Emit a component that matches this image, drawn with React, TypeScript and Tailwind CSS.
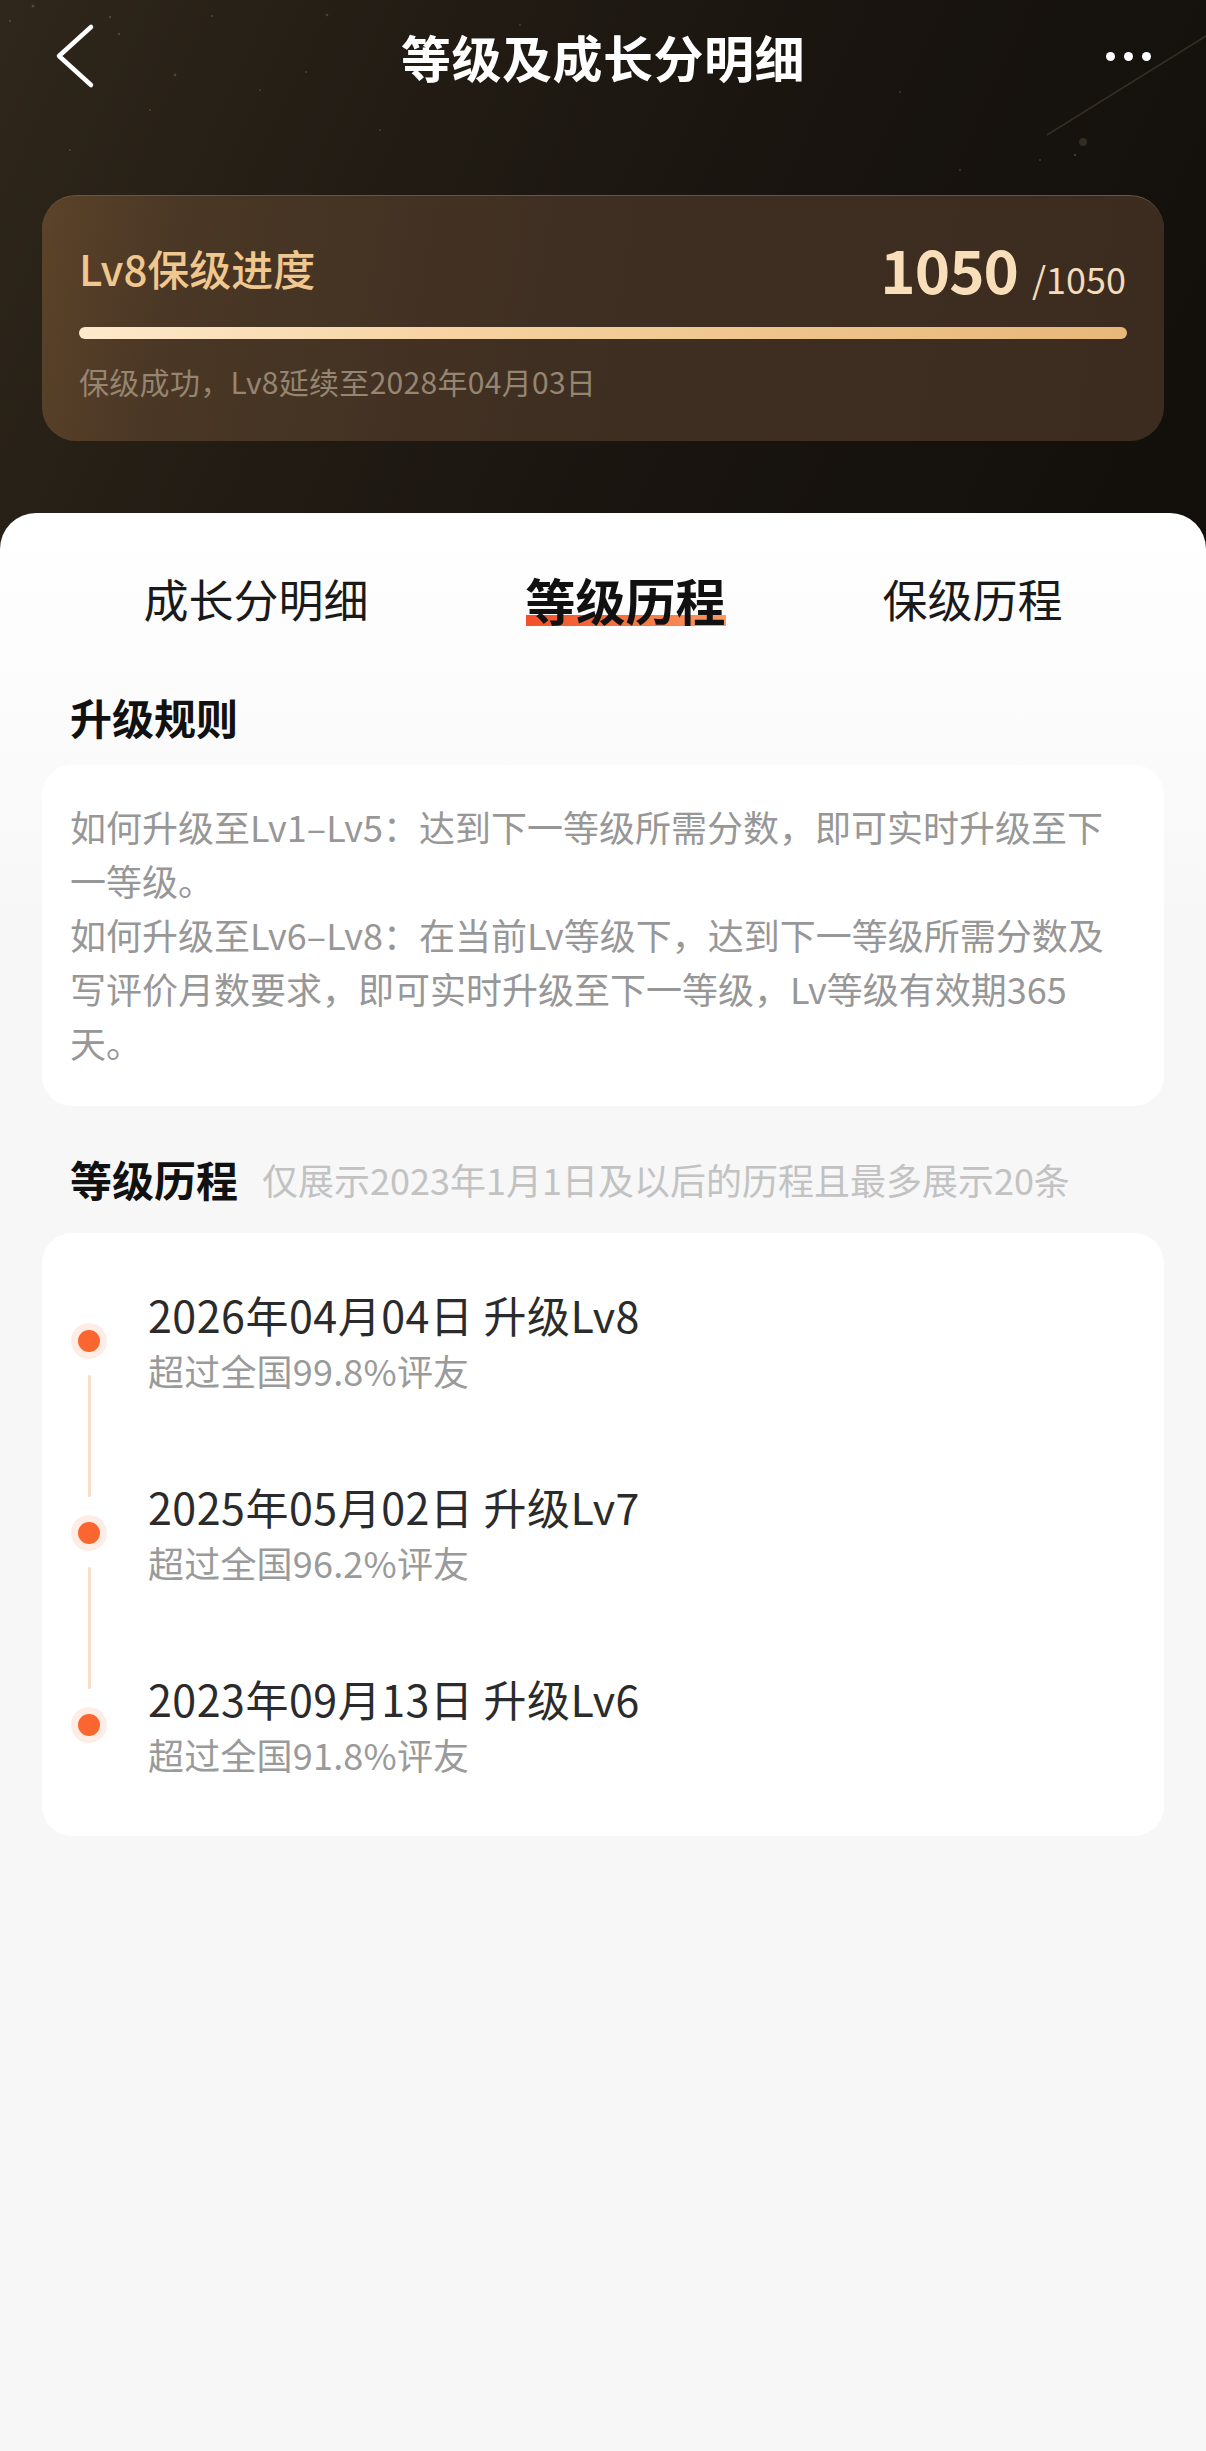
import React from "react";

const items = [
  { title: "2026年04月04日 升级Lv8", sub: "超过全国99.8%评友" },
  { title: "2025年05月02日 升级Lv7", sub: "超过全国96.2%评友" },
  { title: "2023年09月13日 升级Lv6", sub: "超过全国91.8%评友" },
];

const stars: [number, number, number][] = [
  [33, 6, 1.5], [10, 21, 1.2], [110, 17, 1.2], [119, 34, 1.2], [175, 75, 1.4],
  [212, 16, 1], [327, 15, 1.3], [306, 72, 1], [150, 110, 1], [260, 90, 1],
  [420, 40, 1], [520, 25, 1], [590, 60, 1], [900, 92, 1], [1040, 160, 1],
  [960, 170, 1], [1083, 142, 4], [1075, 155, 1.2], [70, 150, 1], [380, 130, 1],
];

export default function App() {
  return (
    <div
      className="w-[1206px] min-h-[2451px] bg-[#f7f7f7]"
      style={{ fontFamily: '"Noto Sans CJK SC", "Noto Sans", sans-serif' }}
    >
      {/* Dark header */}
      <div className="relative h-[560px] overflow-hidden bg-[linear-gradient(115deg,#2f271b_0%,#221c14_30%,#19140f_60%,#120f0b_100%)]">
        <svg className="absolute left-0 top-0" width="1206" height="560" viewBox="0 0 1206 560">
          {stars.map(([x, y, r], i) => (
            <circle key={i} cx={x} cy={y} r={r} fill="#8a7a62" opacity={r > 3 ? 0.25 : 0.4} />
          ))}
          <line x1="1047" y1="135" x2="1206" y2="36" stroke="#5e4f3c" strokeWidth="1.5" opacity="0.45" />
        </svg>

        {/* Nav */}
        <div className="relative grid h-[112px] grid-cols-[1fr_auto_1fr] items-center">
          <div className="pl-[55px]">
            <svg width="40" height="66" viewBox="0 0 40 66" fill="none">
              <path d="M36 4 L4 33 L36 62" stroke="#ffffff" strokeWidth="4.5" strokeLinecap="round" strokeLinejoin="round" />
            </svg>
          </div>
          <div className="text-[50px] font-bold leading-none tracking-[0.5px] text-white">等级及成长分明细</div>
          <div className="flex justify-end gap-[9px] pr-[55px]">
            <span className="h-[9px] w-[9px] rounded-full bg-white" />
            <span className="h-[9px] w-[9px] rounded-full bg-white" />
            <span className="h-[9px] w-[9px] rounded-full bg-white" />
          </div>
        </div>

        {/* Progress card */}
        <div className="relative mx-[42px] mt-[83px] h-[246px] rounded-[34px] border-t border-[#6a553e] bg-[linear-gradient(100deg,#5c4329_0%,#4a3725_12%,#3f2f22_45%,#3c2c20_100%)] px-[37px] pt-[42px]">
          <div className="flex h-[60px] items-center justify-between">
            <div className="text-[42px] font-medium leading-none text-[#f0c78f]">Lv8保级进度</div>
            <div className="flex items-baseline pr-[1px]">
              <span className="text-[60px] font-bold leading-none tracking-[-1px] text-[#f8dfba]">1050</span>
              <span className="ml-[14px] text-[36px] leading-none text-[#f3dcbc]">/1050</span>
            </div>
          </div>
          <div className="mt-[29px] h-[12px] rounded-full bg-[linear-gradient(90deg,#fde9cc_0%,#f6d3a2_35%,#eec38a_70%,#e8b77a_100%)]" />
          <div className="mt-[22px] text-[30px] leading-[40px] tracking-[0.3px] text-[#958571]">保级成功，Lv8延续至2028年04月03日</div>
        </div>
      </div>

      {/* Sheet */}
      <div className="relative -mt-[47px] rounded-t-[36px] bg-[linear-gradient(180deg,#ffffff_0px,#fbfbfb_220px,#f7f7f7_420px)] pb-[40px]">
        {/* Tabs */}
        <div className="flex h-[68px] translate-y-[52px] items-center justify-center gap-[157px]">
          <div className="text-[45px] leading-[68px] text-[#1a1a1a]">成长分明细</div>
          <div className="relative text-[50px] font-bold leading-[68px] text-[#111111]">
            <span className="absolute bottom-[7px] left-0 right-0 h-[11px] bg-[linear-gradient(90deg,#f3502b_0%,#f77a45_60%,#fb9a63_100%)]" />
            <span className="relative">等级历程</span>
          </div>
          <div className="text-[45px] leading-[68px] text-[#1a1a1a]">保级历程</div>
        </div>

        <div className="px-[42px] pt-[107px]">
          <div className="pl-[28px] text-[42px] font-bold leading-[58px] text-[#111111]">升级规则</div>
          <div className="mt-[19px] rounded-[30px] bg-white px-[28px] pb-[37px] pt-[34px] text-[36px] leading-[54px] text-[#979797]">
            <p className="whitespace-nowrap">如何升级至Lv1–Lv5：达到下一等级所需分数，即可实时升级至下</p>
            <p className="whitespace-nowrap">一等级。</p>
            <p className="whitespace-nowrap">如何升级至Lv6–Lv8：在当前Lv等级下，达到下一等级所需分数及</p>
            <p className="whitespace-nowrap">写评价月数要求，即可实时升级至下一等级，Lv等级有效期365</p>
            <p className="whitespace-nowrap">天。</p>
          </div>

          <div className="mt-[44px] flex items-center pl-[28px]">
            <span className="text-[42px] font-bold leading-[58px] text-[#111111]">等级历程</span>
            <span className="ml-[24px] text-[36px] leading-[58px] text-[#c2c2c2]">仅展示2023年1月1日及以后的历程且最多展示20条</span>
          </div>

          <div className="mt-[25px] flex flex-col gap-[80px] rounded-[30px] bg-white pb-[55px] pl-[29px] pt-[52px]">
            {items.map((it, i) => (
              <div key={i} className="relative flex items-center">
                <div className="relative flex h-[36px] w-[36px] items-center justify-center rounded-full bg-[#fdede4]">
                  <span className="h-[22px] w-[22px] rounded-full bg-[#fb6530]" />
                  {i < items.length - 1 && (
                    <span className="absolute left-[16.5px] top-[52px] h-[122px] w-[3px] rounded-full bg-[#f8dccc]" />
                  )}
                </div>
                <div className="ml-[41px]">
                  <div className="text-[43px] leading-[58px] tracking-[0.5px] text-[#2b2b2b]">{it.title}</div>
                  <div className="text-[36px] leading-[54px] tracking-[0.2px] text-[#9a9a9a]">{it.sub}</div>
                </div>
              </div>
            ))}
          </div>
        </div>
      </div>
    </div>
  );
}
